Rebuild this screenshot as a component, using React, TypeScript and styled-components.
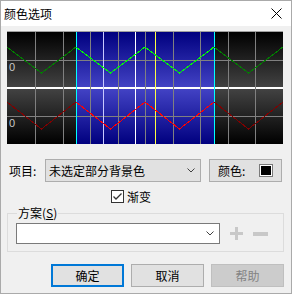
import React from 'react';
import styled, { createGlobalStyle } from 'styled-components';

const Global = createGlobalStyle`
	body {
		margin: 0;
		background: #ffffff;
	}
`

const Window = styled.div`
	width: 292px;
	height: 294px;
	box-sizing: border-box;
	border: 1px solid #aaaaaa;
	background: #f0f0f0;
	display: flex;
	flex-direction: column;
	font-family: "Noto Sans CJK SC", "Noto Sans", sans-serif;
	font-size: 12px;
	color: #000000;
`

const TitleBar = styled.div`
	height: 25px;
	flex-shrink: 0;
	background: #ffffff;
	display: flex;
	align-items: center;
	justify-content: space-between;
	padding: 0 9px 0 3px;
	line-height: 16px;
`

const Body = styled.div`
	display: flex;
	flex-direction: column;
	padding: 5px 8px 0 6px;
`

const Chart = styled.div`
	width: 276px;
	height: 112px;
	border-top: 1px solid #a0a0a0;
	display: flex;
`

const Row = styled.div`
	display: flex;
	align-items: center;
	margin-top: 15px;
	height: 23px;
`

const Label = styled.span`
	width: 36px;
	margin-left: 2px;
	line-height: 16px;
`

const Combo = styled.div<{ $white?: boolean; $width: number }>`
	width: ${p => p.$width}px;
	height: ${p => (p.$white ? 21 : 23)}px;
	box-sizing: border-box;
	border: 1px solid ${p => (p.$white ? '#7a7a7a' : '#adadad')};
	background: ${p => (p.$white ? '#ffffff' : '#e1e1e1')};
	display: flex;
	align-items: center;
	justify-content: space-between;
	padding: 0 5px 0 3px;
	line-height: 16px;
`

const ColorButton = styled.div`
	width: 73px;
	height: 23px;
	box-sizing: border-box;
	margin-left: 8px;
	border: 1px solid #adadad;
	background: #e1e1e1;
	display: flex;
	align-items: center;
	justify-content: space-between;
	padding: 0 8px 0 8px;
	line-height: 16px;
`

const Swatch = styled.span`
	width: 14px;
	height: 13px;
	box-sizing: border-box;
	background: #000000;
	border: 1px solid #7a7a7a;
	box-shadow: inset 0 0 0 1px #ffffff;
`

const CheckRow = styled.label`
	display: flex;
	align-items: center;
	margin: 8px 0 0 104px;
	height: 13px;
	gap: 3px;
	line-height: 16px;
`

const CheckBox = styled.span`
	width: 13px;
	height: 13px;
	box-sizing: border-box;
	border: 1px solid #333333;
	background: #ffffff;
	display: flex;
	align-items: center;
	justify-content: center;
`

const Group = styled.fieldset`
	margin: 2px -1px 0 0;
	padding: 2px 8px 7px 8px;
	border: 1px solid #dcdcdc;
	display: flex;
	align-items: center;
	min-width: 0;
`

const Legend = styled.legend`
	margin-left: 1px;
	padding: 0 1px;
	line-height: 16px;
	color: #000000;
`

const IconSlot = styled.span`
	display: flex;
	margin-left: 10px;
`

const ButtonRow = styled.div`
	display: flex;
	justify-content: flex-end;
	gap: 7px;
	margin: 12px -1px 0 0;
`

const Button = styled.div<{ $kind?: 'default' | 'disabled' }>`
	width: 73px;
	height: 23px;
	box-sizing: border-box;
	display: flex;
	align-items: center;
	justify-content: center;
	line-height: 16px;
	background: ${p => (p.$kind === 'disabled' ? '#cccccc' : '#e1e1e1')};
	color: ${p => (p.$kind === 'disabled' ? '#838383' : '#000000')};
	border: ${p =>
		p.$kind === 'default' ? '2px solid #0078d7' : p.$kind === 'disabled' ? '1px solid #bfbfbf' : '1px solid #adadad'};
`

const Chevron = () => (
	<svg width="8" height="5" viewBox="0 0 8 5">
		<path d="M0.5 0.5 L4 4 L7.5 0.5" fill="none" stroke="#404040" strokeWidth="1" />
	</svg>
)

const wave = (peak: number, trough: number) => {
	const pts: string[] = []
	for (let i = 0; i <= 8; i++) {
		pts.push(`${i * 34.5},${i % 2 === 0 ? peak : trough}`)
	}
	return pts.join(' ')
}

const grid = [28, 56, 83, 111, 138, 166, 193, 221, 248]

const Graph = () => (
	<svg width="276" height="112" viewBox="0 0 276 112" shapeRendering="crispEdges">
		<defs>
			<linearGradient id="darkDown" x1="0" y1="0" x2="0" y2="1">
				<stop offset="0" stopColor="#000000" />
				<stop offset="1" stopColor="#424242" />
			</linearGradient>
			<linearGradient id="darkUp" x1="0" y1="0" x2="0" y2="1">
				<stop offset="0" stopColor="#424242" />
				<stop offset="1" stopColor="#000000" />
			</linearGradient>
			<linearGradient id="blueDown" x1="0" y1="0" x2="0" y2="1">
				<stop offset="0" stopColor="#00007f" />
				<stop offset="1" stopColor="#4242c4" />
			</linearGradient>
			<linearGradient id="blueUp" x1="0" y1="0" x2="0" y2="1">
				<stop offset="0" stopColor="#4242c4" />
				<stop offset="1" stopColor="#00007f" />
			</linearGradient>
			<clipPath id="inside">
				<rect x="69" y="0" width="138" height="112" />
			</clipPath>
		</defs>
		<rect x="0" y="0" width="276" height="55" fill="url(#darkDown)" />
		<rect x="0" y="57" width="276" height="55" fill="url(#darkUp)" />
		<rect x="69" y="0" width="138" height="55" fill="url(#blueDown)" />
		<rect x="69" y="57" width="138" height="55" fill="url(#blueUp)" />
		<rect x="0" y="55" width="276" height="2" fill="#ffffff" />
		{grid.map(x => (
			<rect key={x} x={x} y="0" width="1" height="112" fill="#808080" />
		))}
		<rect x="0" y="28" width="276" height="1" fill="#808080" />
		<rect x="0" y="84" width="276" height="1" fill="#808080" />
		<rect x="96" y="0" width="1" height="112" fill="#c8c8ff" />
		<rect x="128" y="0" width="1" height="112" fill="#ffffff" />
		<rect x="148" y="0" width="1" height="112" fill="#ffff40" />
		<rect x="69" y="0" width="1" height="112" fill="#00ffff" />
		<rect x="207" y="0" width="1" height="112" fill="#00ffff" />
		<polyline points={wave(15, 41)} fill="none" stroke="#008000" strokeWidth="1" />
		<polyline points={wave(70, 97)} fill="none" stroke="#800000" strokeWidth="1" />
		<g clipPath="url(#inside)">
			<polyline points={wave(15, 41)} fill="none" stroke="#00ff00" strokeWidth="1" />
			<polyline points={wave(70, 97)} fill="none" stroke="#ff0000" strokeWidth="1" />
		</g>
		<text x="2" y="39" fill="#c8c8c8" fontSize="11" fontFamily="Liberation Sans, sans-serif">0</text>
		<text x="2" y="95" fill="#c8c8c8" fontSize="11" fontFamily="Liberation Sans, sans-serif">0</text>
	</svg>
)

export default function App() {
	return (
		<Window>
			<Global />
			<TitleBar>
				<span>颜色选项</span>
				<svg width="11" height="11" viewBox="0 0 11 11">
					<path d="M0.5 0.5 L10.5 10.5 M10.5 0.5 L0.5 10.5" stroke="#000000" strokeWidth="1" />
				</svg>
			</TitleBar>
			<Body>
				<Chart>
					<Graph />
				</Chart>
				<Row>
					<Label>项目:</Label>
					<Combo $width={156}>
						<span>未选定部分背景色</span>
						<Chevron />
					</Combo>
					<ColorButton>
						<span>颜色:</span>
						<Swatch />
					</ColorButton>
				</Row>
				<CheckRow>
					<CheckBox>
						<svg width="11" height="11" viewBox="0 0 11 11">
							<path d="M1.5 5.5 L4 8 L9.5 2.5" fill="none" stroke="#333333" strokeWidth="1.3" />
						</svg>
					</CheckBox>
					<span>渐变</span>
				</CheckRow>
				<Group>
					<Legend>
						方案(<u>S</u>)
					</Legend>
					<Combo $white $width={204}>
						<span />
						<Chevron />
					</Combo>
					<IconSlot>
						<svg width="13" height="13" viewBox="0 0 13 13">
							<path d="M5 0 H8 V5 H13 V8 H8 V13 H5 V8 H0 V5 H5 Z" fill="#c8c8c8" />
						</svg>
					</IconSlot>
					<IconSlot>
						<svg width="15" height="13" viewBox="0 0 15 13">
							<rect x="0" y="5" width="15" height="4" fill="#c8c8c8" />
						</svg>
					</IconSlot>
				</Group>
				<ButtonRow>
					<Button $kind="default">确定</Button>
					<Button>取消</Button>
					<Button $kind="disabled">帮助</Button>
				</ButtonRow>
			</Body>
		</Window>
	)
}
